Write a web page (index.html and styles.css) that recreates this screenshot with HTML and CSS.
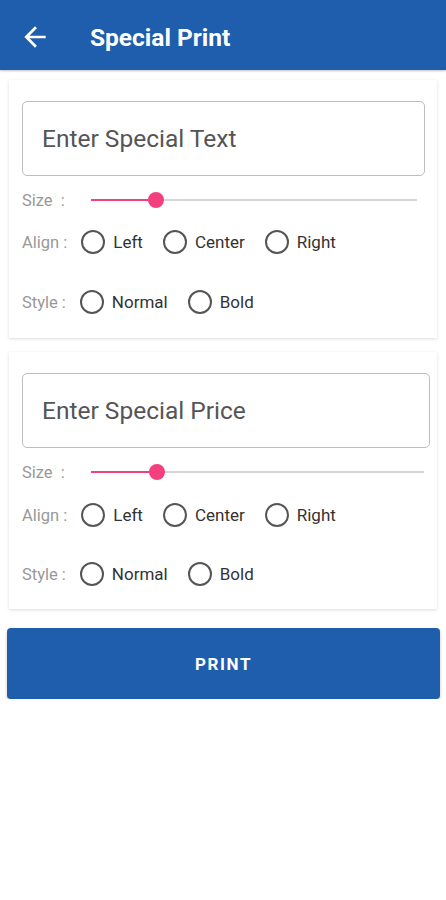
FILE: index.html
```html
<!DOCTYPE html>
<html lang="en">
<head>
  <meta charset="UTF-8" />
  <meta name="viewport" content="width=device-width, initial-scale=1" />
  <title>Special Print</title>
  <link rel="stylesheet" href="styles.css">
</head>
<body>
  <header class="toolbar">
    <span class="back">
      <svg width="32" height="32" viewBox="0 0 24 24"><path fill="#fff" d="M20 11H7.83l5.59-5.59L12 4l-8 8 8 8 1.41-1.41L7.83 13H20v-2z"/></svg>
    </span>
    <h1>Special Print</h1>
  </header>

  <div class="card">
    <div class="field">Enter Special Text</div>
    <div class="row size-row">
      <span class="label size-label">Size&nbsp; :</span>
      <div class="slider"><div class="fill" style="width: 65px;"></div><span class="thumb" style="left: 65px;"></span></div>
    </div>
    <div class="row align-row">
      <span class="label">Align :</span>
      <label class="radio"><span class="dot"></span>Left</label>
      <label class="radio"><span class="dot"></span>Center</label>
      <label class="radio"><span class="dot"></span>Right</label>
    </div>
    <div class="row style-row">
      <span class="label">Style :</span>
      <label class="radio"><span class="dot"></span>Normal</label>
      <label class="radio"><span class="dot"></span>Bold</label>
    </div>
  </div>

  <div class="card card-price">
    <div class="field">Enter Special Price</div>
    <div class="row size-row">
      <span class="label size-label">Size&nbsp; :</span>
      <div class="slider"><div class="fill" style="width: 66px;"></div><span class="thumb" style="left: 66px;"></span></div>
    </div>
    <div class="row align-row">
      <span class="label">Align :</span>
      <label class="radio"><span class="dot"></span>Left</label>
      <label class="radio"><span class="dot"></span>Center</label>
      <label class="radio"><span class="dot"></span>Right</label>
    </div>
    <div class="row style-row">
      <span class="label">Style :</span>
      <label class="radio"><span class="dot"></span>Normal</label>
      <label class="radio"><span class="dot"></span>Bold</label>
    </div>
  </div>

  <button class="print">PRINT</button>
</body>
</html>
```

FILE: styles.css
```css
html, body {
  margin: 0;
  padding: 0;
  font-family: Roboto, 'Noto Sans', sans-serif;
  background: #fff;
  color: #333;
}
.toolbar {
  height: 70px;
  box-sizing: border-box;
  padding-top: 4px;
  background: #1e5eac;
  display: flex;
  align-items: center;
  box-shadow: 0 1px 2px rgba(0, 0, 0, 0.25);
}
.back {
  display: flex;
  margin-left: 19px;
}
.toolbar h1 {
  margin: 0 0 0 39px;
  font-size: 24.5px;
  font-weight: 700;
  color: #fff;
}
.card {
  margin: 10px 9px 0 9px;
  padding: 21px 12px 21px 13px;
  background: #fff;
  box-shadow: 0 1px 3px rgba(0, 0, 0, 0.14);
}
.card-price {
  margin-top: 14px;
  padding-right: 7px;
  padding-bottom: 20px;
}
.field {
  height: 75px;
  box-sizing: border-box;
  border: 1px solid #bdbdbd;
  border-radius: 5px;
  padding-left: 19px;
  display: flex;
  align-items: center;
  font-size: 24.5px;
  color: #555;
}
.row {
  display: flex;
  align-items: center;
  height: 30px;
}
.size-row {
  height: 24px;
  margin-top: 12px;
}
.align-row {
  margin-top: 15px;
}
.style-row {
  margin-top: 30px;
}
.card-price .align-row {
  margin-top: 16px;
}
.card-price .style-row {
  margin-top: 29px;
}
.label {
  font-size: 16.5px;
  color: #999;
  margin-right: 14px;
}
.size-label {
  width: 69px;
  margin-right: 0;
}
.slider {
  flex: 1;
  position: relative;
  height: 2px;
  background: #d6d6d6;
  margin-right: 8px;
}
.card-price .slider {
  margin-right: 6px;
}
.fill {
  height: 2px;
  background: #f23f7e;
}
.thumb {
  position: absolute;
  top: -7px;
  width: 16px;
  height: 16px;
  margin-left: -8px;
  border-radius: 50%;
  background: #f23f7e;
}
.radio {
  display: flex;
  align-items: center;
  font-size: 17px;
  color: #333;
  margin-right: 20px;
}
.dot {
  width: 20px;
  height: 20px;
  border: 2px solid #555;
  border-radius: 50%;
  margin-right: 8px;
}
.print {
  display: block;
  box-sizing: border-box;
  width: 433px;
  height: 71px;
  margin: 19px 0 0 7px;
  border: none;
  border-radius: 4px;
  background: #1e5eac;
  color: #fff;
  font-family: Roboto, sans-serif;
  font-size: 17px;
  font-weight: 700;
  letter-spacing: 1.6px;
  box-shadow: 0 2px 3px rgba(0, 0, 0, 0.25);
}
```
